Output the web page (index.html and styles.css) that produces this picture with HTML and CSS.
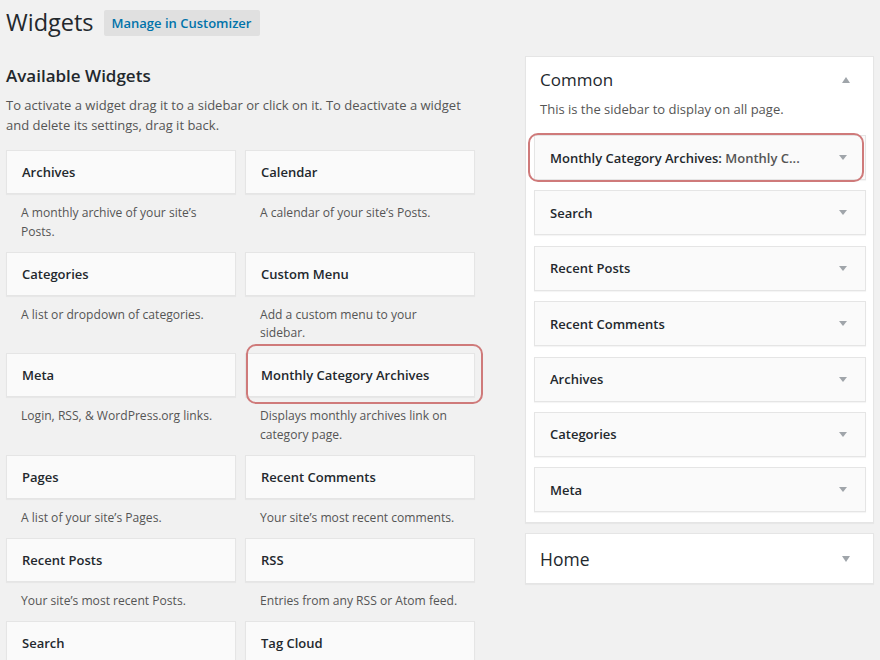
FILE: index.html
```html
<!DOCTYPE html>
<html>
<head>
<meta charset="utf-8">
<link rel="stylesheet" href="styles.css">
</head>
<body>
<div class="wrap">
  <div class="header">
    <h1 class="title">Widgets</h1>
    <a class="btn">Manage in Customizer</a>
  </div>
  <div class="cols">
    <div class="left">
      <h2 class="avail">Available Widgets</h2>
      <p class="intro">To activate a widget drag it to a sidebar or click on it. To deactivate a widget and delete its settings, drag it back.</p>
      <div class="grid">
        <div class="widget"><div class="wtop">Archives</div><div class="wdesc">A monthly archive of your site’s Posts.</div></div>
        <div class="widget"><div class="wtop">Calendar</div><div class="wdesc">A calendar of your site’s Posts.</div></div>
        <div class="widget"><div class="wtop">Categories</div><div class="wdesc">A list or dropdown of categories.</div></div>
        <div class="widget"><div class="wtop">Custom Menu</div><div class="wdesc">Add a custom menu to your sidebar.</div></div>
        <div class="widget"><div class="wtop">Meta</div><div class="wdesc">Login, RSS, &amp; WordPress.org links.</div></div>
        <div class="widget"><div class="wtop hl-left">Monthly Category Archives</div><div class="wdesc">Displays monthly archives link on category page.</div></div>
        <div class="widget"><div class="wtop">Pages</div><div class="wdesc">A list of your site’s Pages.</div></div>
        <div class="widget"><div class="wtop">Recent Comments</div><div class="wdesc">Your site’s most recent comments.</div></div>
        <div class="widget"><div class="wtop">Recent Posts</div><div class="wdesc">Your site’s most recent Posts.</div></div>
        <div class="widget"><div class="wtop">RSS</div><div class="wdesc">Entries from any RSS or Atom feed.</div></div>
        <div class="widget"><div class="wtop">Search</div><div class="wdesc">A search form for your site.</div></div>
        <div class="widget"><div class="wtop">Tag Cloud</div><div class="wdesc">A cloud of your most used tags.</div></div>
      </div>
    </div>
    <div class="right">
      <div class="sidebar">
        <div class="sb-head">
          <span class="sb-name">Common</span>
          <span class="tri-up"></span>
        </div>
        <p class="sb-desc">This is the sidebar to display on all page.</p>
        <div class="sb-widgets">
          <div class="sw hl-right"><span class="sw-title">Monthly Category Archives:<span class="in-title"> Monthly C...</span></span><span class="tri-down"></span></div>
          <div class="sw"><span class="sw-title">Search</span><span class="tri-down"></span></div>
          <div class="sw"><span class="sw-title">Recent Posts</span><span class="tri-down"></span></div>
          <div class="sw"><span class="sw-title">Recent Comments</span><span class="tri-down"></span></div>
          <div class="sw"><span class="sw-title">Archives</span><span class="tri-down"></span></div>
          <div class="sw"><span class="sw-title">Categories</span><span class="tri-down"></span></div>
          <div class="sw"><span class="sw-title">Meta</span><span class="tri-down"></span></div>
        </div>
      </div>
      <div class="sidebar closed">
        <div class="sb-head home">
          <span class="sb-name">Home</span>
          <span class="tri-down big"></span>
        </div>
      </div>
    </div>
  </div>
</div>
</body>
</html>
```

FILE: styles.css
```css
html, body {
  margin: 0;
  padding: 0;
  background: #f1f1f1;
  font-family: "Open Sans", "Noto Sans", sans-serif;
  color: #23282d;
  font-size: 13px;
  overflow: hidden;
}

.wrap {
  padding: 0 6px;
}

.header {
  display: flex;
  align-items: center;
  height: 46px;
}

.title {
  margin: 0;
  font-size: 23.5px;
  font-weight: 400;
  line-height: 1;
  color: #23282d;
}

.btn {
  margin-left: 10px;
  height: 26px;
  display: flex;
  align-items: center;
  padding: 0 9px 0 8px;
  background: #e0e0e0;
  color: #0073aa;
  font-weight: 600;
  font-size: 13px;
  border-radius: 2px;
}

.cols {
  display: flex;
}

.left {
  width: 469px;
}

.avail {
  margin: 18px 0 0;
  font-size: 17px;
  font-weight: 600;
  line-height: 24px;
}

.intro {
  margin: 7px 0 0;
  line-height: 20px;
  color: #555;
  font-size: 13px;
}

.grid {
  margin-top: 15px;
  display: grid;
  grid-template-columns: 230px 230px;
  column-gap: 9px;
}

.wtop {
  position: relative;
  height: 42px;
  display: flex;
  align-items: center;
  padding: 0 15px;
  background: #fafafa;
  border: 1px solid #e5e5e5;
  box-shadow: 0 1px 1px rgba(0, 0, 0, 0.04);
  font-weight: 600;
  font-size: 13px;
}

.wdesc {
  padding: 10px 15px 10.5px;
  line-height: 18.5px;
  font-size: 12.1px;
  color: #555;
}

.hl-left::after {
  content: "";
  position: absolute;
  top: -10px;
  left: 0;
  right: -9px;
  bottom: -8px;
  border: 2.5px solid #cf7a7a;
  border-radius: 10px;
}

.right {
  margin-left: 50px;
  width: 349px;
}

.sidebar {
  margin-top: 10px;
  background: #fff;
  border: 1px solid #e5e5e5;
  box-shadow: 0 1px 1px rgba(0, 0, 0, 0.04);
  padding-bottom: 10px;
}

.sb-head {
  display: flex;
  align-items: center;
  justify-content: space-between;
  padding: 11px 23px 0 14px;
  height: 24px;
}

.sb-name {
  font-size: 17px;
  line-height: 24px;
  font-weight: 400;
}

.home .sb-name {
  font-size: 17.5px;
}

.tri-up {
  width: 0;
  height: 0;
  border-left: 4px solid transparent;
  border-right: 4px solid transparent;
  border-bottom: 6px solid #a0a5aa;
}

.tri-down {
  width: 0;
  height: 0;
  border-left: 4px solid transparent;
  border-right: 4px solid transparent;
  border-top: 5px solid #a0a5aa;
}

.sb-desc {
  margin: 8px 0 0 14px;
  line-height: 18px;
  color: #555;
}

.sb-widgets {
  margin-top: 17px;
  padding: 0 7px 0 8px;
  display: flex;
  flex-direction: column;
  gap: 10.4px;
}

.sw {
  position: relative;
  height: 43px;
  display: flex;
  align-items: center;
  justify-content: space-between;
  padding: 0 18px 0 15px;
  background: #fafafa;
  border: 1px solid #e5e5e5;
  box-shadow: 0 1px 1px rgba(0, 0, 0, 0.04);
}

.sw-title {
  font-weight: 600;
}

.in-title {
  color: #555;
}

.hl-right::after {
  content: "";
  position: absolute;
  top: -3px;
  left: -7px;
  right: 1px;
  bottom: -3px;
  border: 2.5px solid #cf7a7a;
  border-radius: 10px;
}

.closed {
  padding-bottom: 0;
}

.home {
  height: 49px;
  padding-top: 0;
}

.tri-down.big {
  border-left-width: 4.5px;
  border-right-width: 4.5px;
  border-top-width: 6px;
}
```
